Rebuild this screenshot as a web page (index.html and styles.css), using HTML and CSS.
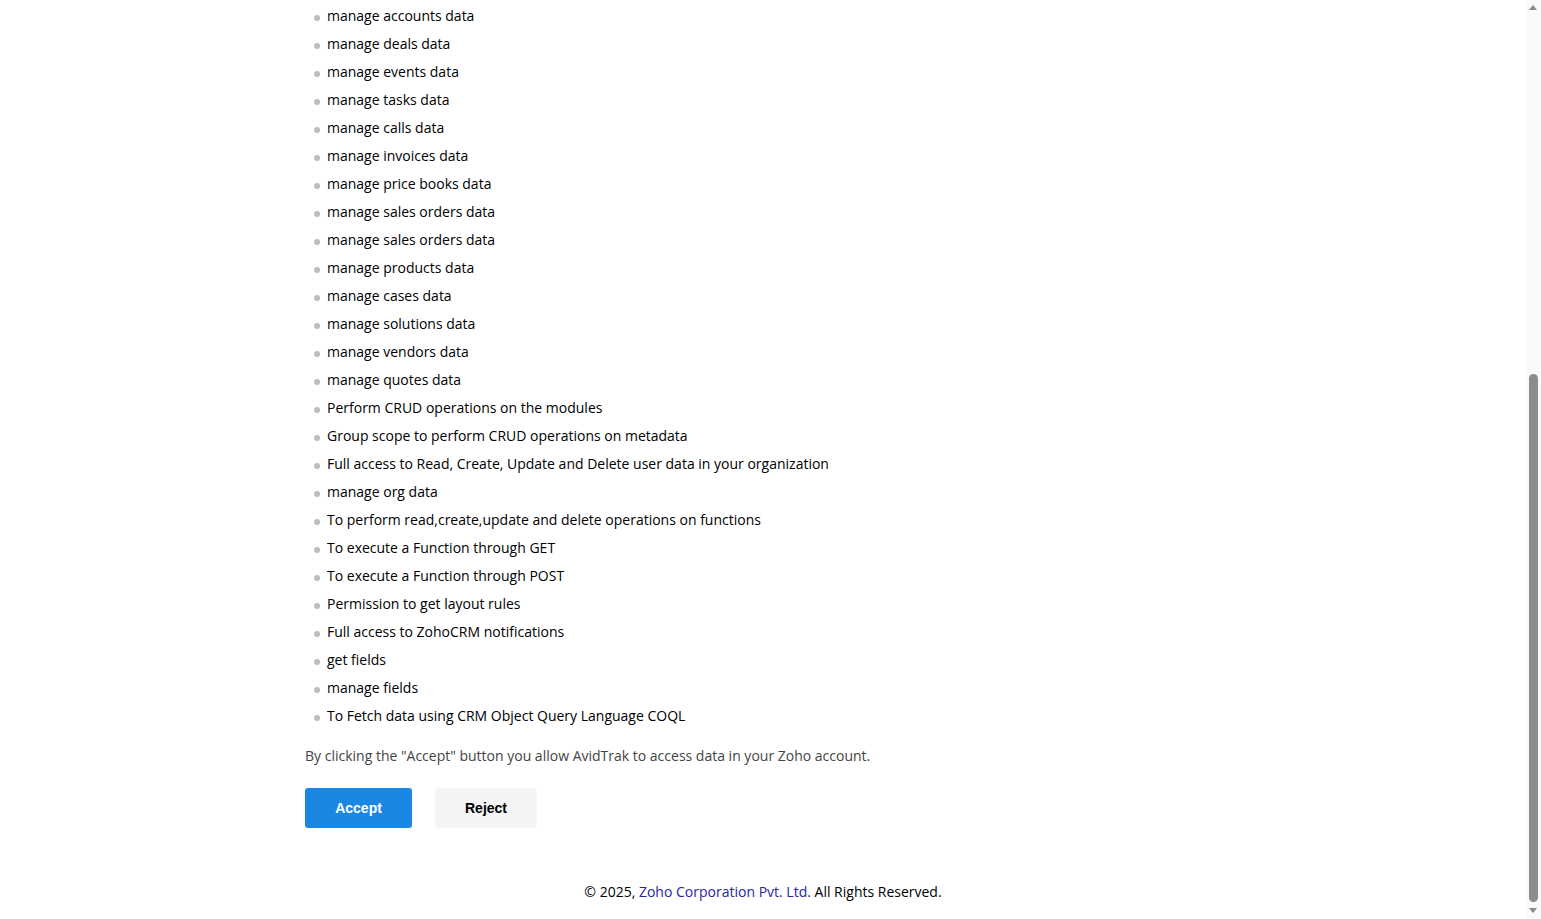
FILE: index.html
```html
<!DOCTYPE html>
<html lang="en">
<head>
<meta charset="utf-8">
<title>Zoho Accounts - Authorize</title>
<link rel="stylesheet" href="styles.css">
</head>
<body>
<div class="page">
  <main class="content">
    <ul class="scopes">
      <li>manage accounts data</li>
      <li>manage deals data</li>
      <li>manage events data</li>
      <li>manage tasks data</li>
      <li>manage calls data</li>
      <li>manage invoices data</li>
      <li>manage price books data</li>
      <li>manage sales orders data</li>
      <li>manage sales orders data</li>
      <li>manage products data</li>
      <li>manage cases data</li>
      <li>manage solutions data</li>
      <li>manage vendors data</li>
      <li>manage quotes data</li>
      <li>Perform CRUD operations on the modules</li>
      <li>Group scope to perform CRUD operations on metadata</li>
      <li>Full access to Read, Create, Update and Delete user data in your organization</li>
      <li>manage org data</li>
      <li>To perform read,create,update and delete operations on functions</li>
      <li>To execute a Function through GET</li>
      <li>To execute a Function through POST</li>
      <li>Permission to get layout rules</li>
      <li>Full access to ZohoCRM notifications</li>
      <li>get fields</li>
      <li>manage fields</li>
      <li>To Fetch data using CRM Object Query Language COQL</li>
    </ul>
    <p class="notice">By clicking the "Accept" button you allow AvidTrak to access data in your Zoho account.</p>
    <div class="actions">
      <button class="btn btn-accept" type="button">Accept</button>
      <button class="btn btn-reject" type="button">Reject</button>
    </div>
  </main>
  <footer class="footer">© 2025, <a class="footer-link" href="#">Zoho Corporation Pvt. Ltd.</a> All Rights Reserved.</footer>
</div>
<div class="scrollbar" aria-hidden="true">
  <div class="sb-arrow sb-up"></div>
  <div class="sb-track"><div class="sb-thumb"></div></div>
  <div class="sb-arrow sb-down"></div>
</div>
</body>
</html>
```
FILE: styles.css
```css
html, body {
  margin: 0;
  padding: 0;
  background: #ffffff;
}
body {
  font-family: "Open Sans", "Liberation Sans", sans-serif;
  font-size: 14px;
  color: #000000;
  overflow: hidden;
}
.page {
  width: 1526px;
  height: 919px;
  display: flex;
  flex-direction: column;
}
.content {
  padding-left: 305px;
  padding-top: 2px;
}
.scopes {
  list-style: none;
  margin: 0;
  padding: 0 0 0 22px;
}
.scopes li {
  position: relative;
  height: 28px;
  line-height: 28px;
}
.scopes li::before {
  content: "";
  position: absolute;
  left: -13px;
  top: 13px;
  width: 6px;
  height: 6px;
  border-radius: 50%;
  background: #bdbdbd;
}
.notice {
  margin: 16px 0 0 0;
  line-height: 20px;
  color: #444444;
}
.actions {
  display: flex;
  gap: 23px;
  margin-top: 22px;
}
.btn {
  font-family: "Liberation Sans", Arial, sans-serif;
  font-weight: bold;
  font-size: 14px;
  height: 40px;
  border: none;
  border-radius: 3px;
  cursor: pointer;
}
.btn-accept {
  width: 107px;
  background: #1a87e2;
  color: #ffffff;
}
.btn-reject {
  width: 102px;
  background: #f4f4f4;
  color: #000000;
}
.footer {
  margin-top: 54px;
  text-align: center;
  line-height: 20px;
  color: #000000;
}
.footer-link {
  color: #26269e;
  text-decoration: none;
}
.scrollbar {
  position: fixed;
  top: 0;
  right: 0;
  width: 15px;
  height: 919px;
  background: #f9f9f9;
  display: flex;
  flex-direction: column;
  align-items: center;
}
.sb-arrow {
  height: 17px;
  width: 15px;
  flex: none;
  position: relative;
}
.sb-up::after, .sb-down::after {
  content: "";
  position: absolute;
  left: 3px;
  border-left: 4px solid transparent;
  border-right: 4px solid transparent;
}
.sb-up::after {
  top: 5px;
  border-bottom: 5px solid #8a8a8a;
}
.sb-down::after {
  top: 6px;
  border-top: 5px solid #8a8a8a;
}
.sb-track {
  flex: 1;
  width: 15px;
  position: relative;
}
.sb-thumb {
  position: absolute;
  left: 3px;
  width: 9px;
  top: 357px;
  bottom: 0;
  border-radius: 5px;
  background: #8c8c8c;
}
```
